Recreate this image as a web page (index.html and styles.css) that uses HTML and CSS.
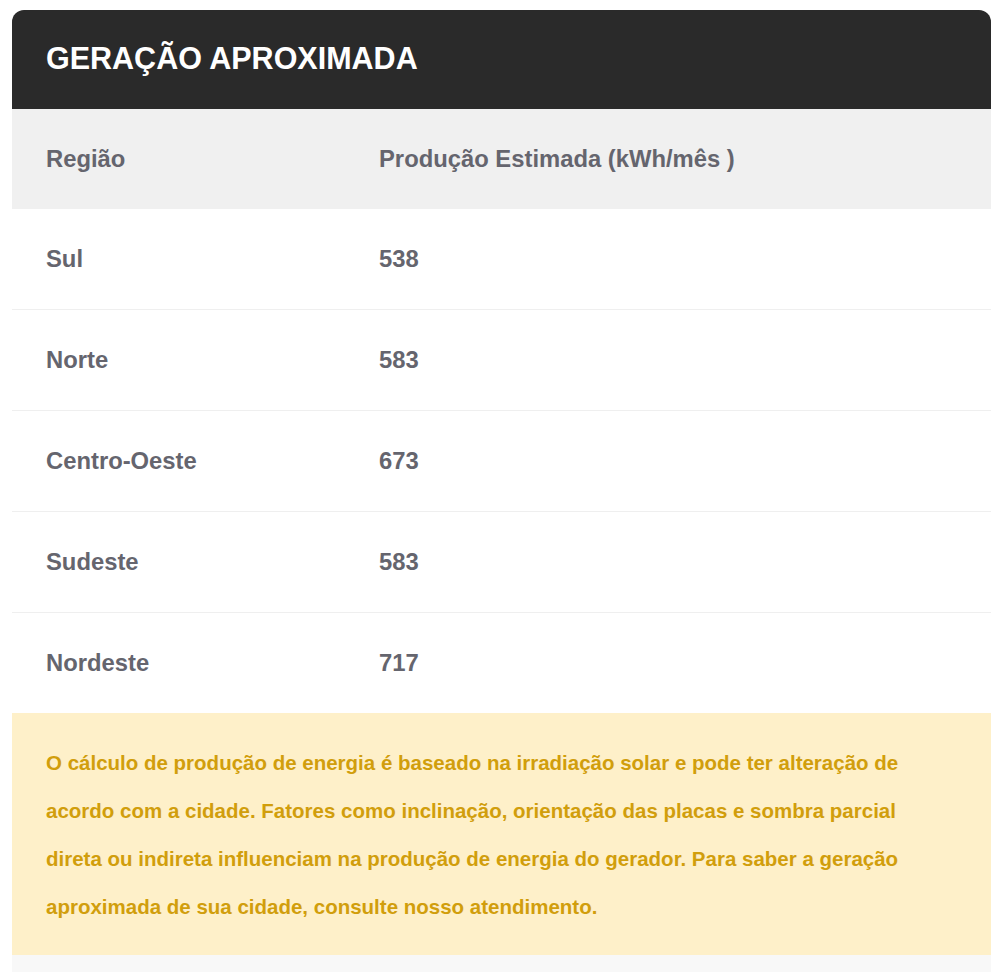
FILE: index.html
```html
<!DOCTYPE html>
<html lang="pt">
<head>
<meta charset="utf-8">
<link rel="stylesheet" href="styles.css">
</head>
<body>
<div class="card">
  <div class="card-head">
    <h2 class="title">GERAÇÃO APROXIMADA</h2>
  </div>
  <div class="table">
    <div class="row head-row"><div class="cell c1">Região</div><div class="cell">Produção Estimada (kWh/mês )</div></div>
    <div class="row"><div class="cell c1">Sul</div><div class="cell">538</div></div>
    <div class="row"><div class="cell c1">Norte</div><div class="cell">583</div></div>
    <div class="row"><div class="cell c1">Centro-Oeste</div><div class="cell">673</div></div>
    <div class="row"><div class="cell c1">Sudeste</div><div class="cell">583</div></div>
    <div class="row"><div class="cell c1">Nordeste</div><div class="cell">717</div></div>
  </div>
  <div class="note">
    <p>O cálculo de produção de energia é baseado na irradiação solar e pode ter alteração de acordo com a cidade. Fatores como inclinação, orientação das placas e sombra parcial direta ou indireta influenciam na produção de energia do gerador. Para saber a geração aproximada de sua cidade, consulte nosso atendimento.</p>
  </div>
  <div class="foot"></div>
</div>
</body>
</html>
```

FILE: styles.css
```css
html, body {
  margin: 0;
  padding: 0;
  background: #ffffff;
}
body {
  padding: 10px 10px 0 12px;
  font-family: "Liberation Sans", Arial, sans-serif;
}
.card {
  width: 979px;
  background: #ffffff;
}
.card-head {
  background: #2a2a2a;
  border-radius: 12px 12px 0 0;
  height: 99px;
  display: flex;
  align-items: center;
  padding: 0 34px;
  box-sizing: border-box;
}
.title {
  margin: 0;
  color: #ffffff;
  font-size: 30.5px;
  font-weight: bold;
  line-height: 1;
  padding-bottom: 2px;
}
.table {
  display: flex;
  flex-direction: column;
}
.row {
  display: grid;
  grid-template-columns: 333px 1fr;
  height: 100px;
  align-items: center;
  border-top: 1px solid #efefef;
  color: #65656e;
  font-size: 23.8px;
  font-weight: bold;
}
.row:first-child, .row:nth-child(2) {
  border-top: none;
}
.head-row {
  background: #f0f0f0;
}
.cell {
  padding-left: 34px;
}
.note {
  background: #fef0c9;
  padding: 26px 34px 24px;
}
.note p {
  margin: 0;
  color: #d19e0c;
  font-size: 20.5px;
  font-weight: bold;
  line-height: 48px;
  max-width: 880px;
}
.foot {
  background: #f8f8f8;
  height: 30px;
}
```
